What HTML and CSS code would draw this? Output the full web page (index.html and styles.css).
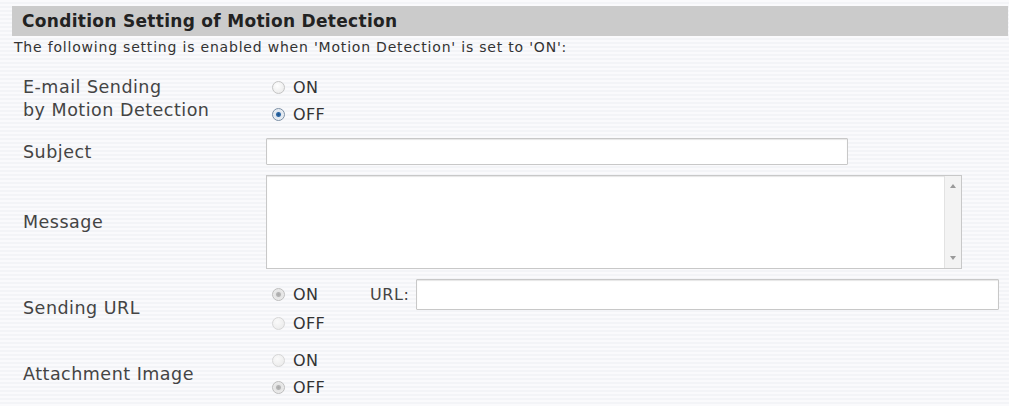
FILE: index.html
```html
<!DOCTYPE html>
<html lang="en">
<head>
    <meta charset="UTF-8">
    <title>Condition Setting of Motion Detection</title>
    <link rel="stylesheet" href="styles.css">
</head>
<body>
    <div class="panel">
        <div class="title">Condition Setting of Motion Detection</div>
        <div class="note">The following setting is enabled when 'Motion Detection' is set to 'ON':</div>

        <div class="form">
            <div class="label top">E-mail Sending<br>by Motion Detection</div>
            <div class="choices">
                <label class="choice"><input type="radio" name="mail"> ON</label>
                <label class="choice"><input type="radio" name="mail" checked> OFF</label>
            </div>

            <div class="label">Subject</div>
            <div><input type="text" class="text subject"></div>

            <div class="label">Message</div>
            <div class="area">
                <textarea class="message"></textarea>
                <div class="scroll">
                    <span class="arrow up"></span>
                    <span class="arrow down"></span>
                </div>
            </div>

            <div class="label">Sending URL</div>
            <div class="choices">
                <div class="url-line">
                    <label class="choice wide"><input type="radio" name="url" checked disabled> ON</label>
                    <span class="url-label">URL:</span>
                    <input type="text" class="text url">
                </div>
                <label class="choice"><input type="radio" name="url" disabled> OFF</label>
            </div>

            <div class="label">Attachment Image</div>
            <div class="choices">
                <label class="choice"><input type="radio" name="att" disabled> ON</label>
                <label class="choice"><input type="radio" name="att" checked disabled> OFF</label>
            </div>
        </div>
    </div>
</body>
</html>
```

FILE: styles.css
```css
body {
    margin: 0;
    font-family: "DejaVu Sans", Verdana, sans-serif;
    color: #333;
    background: #f8f8fa repeating-linear-gradient(180deg, #fafafc 0, #fafafc 2px, #f3f4f7 2px, #f3f4f7 4px);
    height: 406px;
    overflow: hidden;
}

.panel {
    padding: 6px 1px 0 12px;
}

.title {
    background: #cbcbcb;
    height: 30px;
    line-height: 31px;
    padding-left: 10px;
    font-size: 17px;
    letter-spacing: 0.3px;
    font-weight: bold;
    color: #222;
}

.note {
    margin: 3px 0 0 2px;
    font-size: 14px;
    letter-spacing: 0.8px;
    line-height: 16px;
    color: #333;
}

.form {
    display: grid;
    grid-template-columns: 254px 1fr;
    row-gap: 10px;
    margin-top: 19px;
}

.label {
    padding-left: 11px;
    font-size: 17.5px;
    letter-spacing: 0.5px;
    color: #444;
    align-self: center;
}

.label.top {
    align-self: start;
    line-height: 23px;
    padding-top: 2px;
}

.choices {
    display: flex;
    flex-direction: column;
}

.choice {
    display: flex;
    align-items: center;
    height: 27px;
    font-size: 16px;
    letter-spacing: 0.4px;
    color: #333;
    padding-left: 6px;
}

.choice.wide {
    width: 98px;
}

.choice input {
    appearance: none;
    width: 13px;
    height: 13px;
    margin: 0 8px 0 0;
    border: 1px solid #c4c4c4;
    border-radius: 50%;
    background: radial-gradient(circle at 40% 35%, #ffffff, #e6e6e6);
    box-sizing: border-box;
}

.choice input:checked {
    border-color: #7a8ea4;
    background: radial-gradient(circle, #1d4f86 0, #2f6aa8 2px, #dfe6ee 3px, #f4f6f8 100%);
}

.choice input:disabled {
    border-color: #d6d6d6;
    background: radial-gradient(circle at 40% 35%, #fafafa, #e8e8e8);
}

.choice input:checked:disabled {
    border-color: #bdbdbd;
    background: radial-gradient(circle, #a9a9a9 0, #b5b5b5 2px, #e4e4e4 3px, #f0f0f0 100%);
}

.url-line {
    display: flex;
    align-items: center;
}

.url-label {
    font-size: 16px;
    letter-spacing: 0.6px;
    color: #444;
    margin-right: 6px;
}

.text {
    box-sizing: border-box;
    height: 27px;
    border: 1px solid #c8c8c8;
    border-radius: 1px;
    background: #fff;
    box-shadow: inset 0 1px 1px #e6e6e6;
    margin: 0;
}

.subject {
    width: 582px;
}

.url {
    width: 583px;
    height: 31px;
}

.area {
    display: flex;
    box-sizing: border-box;
    width: 696px;
    height: 94px;
    border: 1px solid #c8c8c8;
    background: #fff;
    box-shadow: inset 0 1px 1px #e6e6e6;
}

.message {
    flex: 1;
    border: none;
    resize: none;
    background: transparent;
    outline: none;
}

.scroll {
    width: 16px;
    border-left: 1px solid #e2e2e2;
    background: #f3f3f3;
    display: flex;
    flex-direction: column;
    justify-content: space-between;
    align-items: center;
    padding: 8px 0;
}

.arrow {
    width: 0;
    height: 0;
    border-left: 3px solid transparent;
    border-right: 3px solid transparent;
}

.arrow.up {
    border-bottom: 4px solid #9a9a9a;
}

.arrow.down {
    border-top: 4px solid #9a9a9a;
}
```
